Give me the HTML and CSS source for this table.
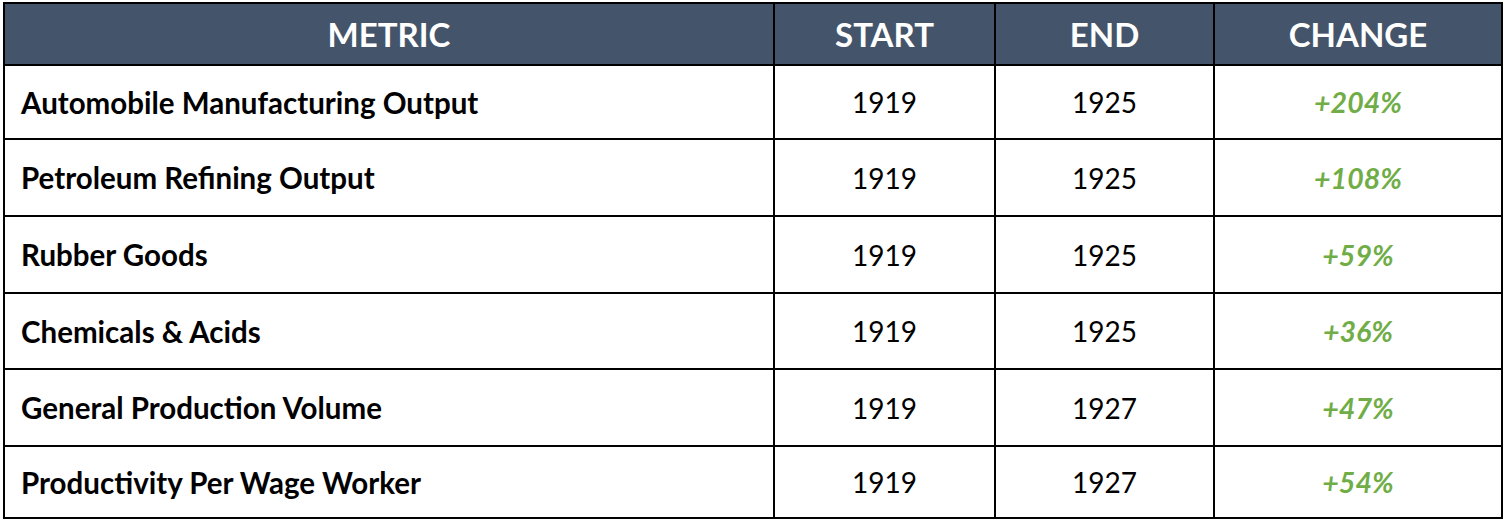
FILE: index.html
```html
<!DOCTYPE html>
<html>
<head>
<meta charset="utf-8">
<link rel="stylesheet" href="styles.css">
</head>
<body>
<table class="data">
  <colgroup>
    <col class="c-metric"><col class="c-year"><col class="c-year2"><col class="c-change">
  </colgroup>
  <thead>
    <tr><th>METRIC</th><th>START</th><th>END</th><th>CHANGE</th></tr>
  </thead>
  <tbody>
    <tr class="r1"><td class="metric">Automobile Manufacturing Output</td><td>1919</td><td>1925</td><td class="chg">+204%</td></tr>
    <tr class="r2"><td class="metric">Petroleum Refining Output</td><td>1919</td><td>1925</td><td class="chg">+108%</td></tr>
    <tr class="r3"><td class="metric">Rubber Goods</td><td>1919</td><td>1925</td><td class="chg">+59%</td></tr>
    <tr class="r4"><td class="metric">Chemicals &amp; Acids</td><td>1919</td><td>1925</td><td class="chg">+36%</td></tr>
    <tr class="r5"><td class="metric">General Production Volume</td><td>1919</td><td>1927</td><td class="chg">+47%</td></tr>
    <tr class="r6"><td class="metric">Productivity Per Wage Worker</td><td>1919</td><td>1927</td><td class="chg">+54%</td></tr>
  </tbody>
</table>
</body>
</html>
```
FILE: styles.css
```css
html, body {
  margin: 0;
  padding: 0;
  background: #ffffff;
}
body {
  padding: 2px 0 0 3px;
  font-family: "Lato", "Open Sans", sans-serif;
}
.data {
  border-collapse: collapse;
  table-layout: fixed;
  width: 1498px;
  border: 2px solid #000;
}
.c-metric { width: 770px; }
.c-year { width: 221px; }
.c-year2 { width: 219px; }
.c-change { width: 288px; }
.data th {
  background: #44546a;
  color: #fff;
  font-weight: 700;
  font-size: 33px;
  height: 60px;
  padding: 0;
  text-align: center;
  border: 2px solid #000;
  border-top: none;
}
.data td {
  border: 2px solid #000;
  height: 72px;
  padding: 0;
  font-size: 28px;
  text-align: center;
  color: #000;
}
.data td.metric {
  text-align: left;
  padding-left: 16px;
  font-size: 29.5px;
  font-weight: 700;
}
.data td.chg {
  color: #70ad47;
  font-size: 28.5px;
  font-weight: 700;
  font-style: italic;
}
.r2 td, .r3 td { height: 75px; }
.r4 td { height: 74px; }
.r5 td { height: 75px; }
.r6 td { height: 70px; }
```
